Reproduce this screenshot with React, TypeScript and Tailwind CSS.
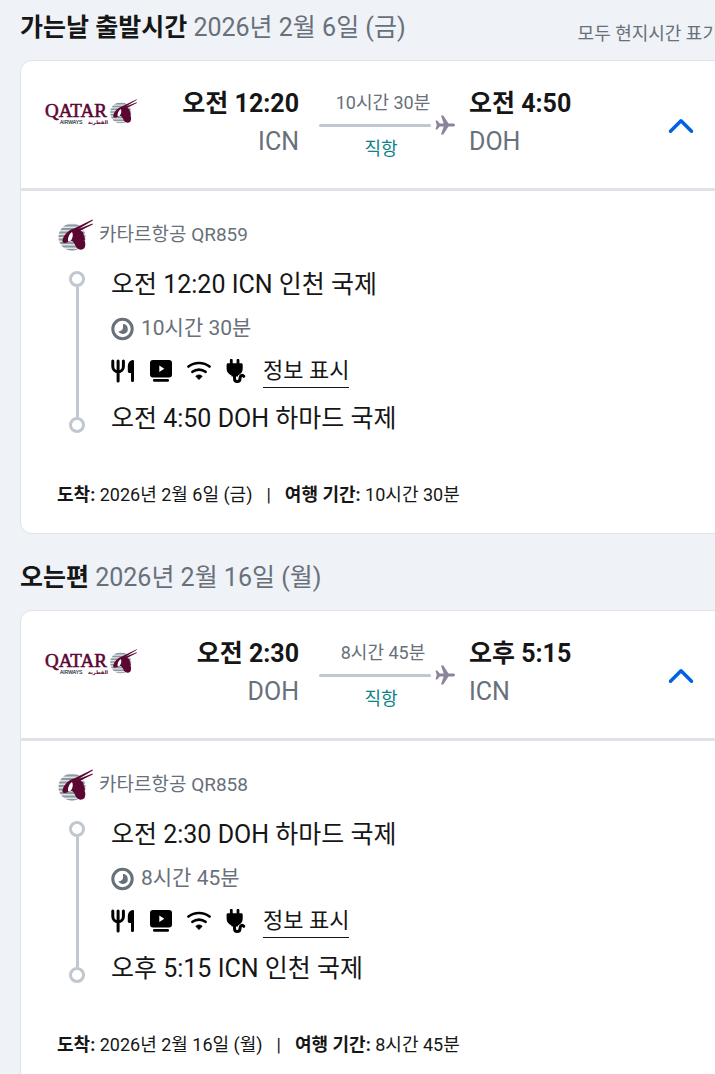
import {ReactNode, useId, useState} from 'react'
import {ChevronDown, ChevronUp} from 'lucide-react'

type Stop = {
    time: string
    code: string
    airport: string
}

type Leg = {
    id: string
    title: string
    date: string
    note?: string
    flight: string
    duration: string
    from: Stop
    to: Stop
    arrival: string
}

const legs: Leg[] = [
    {
        id: 'outbound',
        title: '가는날 출발시간',
        date: '2026년 2월 6일 (금)',
        note: '모두 현지시간 표기',
        flight: 'QR859',
        duration: '10시간 30분',
        from: {time: '오전 12:20', code: 'ICN', airport: '인천 국제'},
        to: {time: '오전 4:50', code: 'DOH', airport: '하마드 국제'},
        arrival: '2026년 2월 6일 (금)',
    },
    {
        id: 'return',
        title: '오는편',
        date: '2026년 2월 16일 (월)',
        flight: 'QR858',
        duration: '8시간 45분',
        from: {time: '오전 2:30', code: 'DOH', airport: '하마드 국제'},
        to: {time: '오후 5:15', code: 'ICN', airport: '인천 국제'},
        arrival: '2026년 2월 16일 (월)',
    },
]

// Striped disc with the oryx head, drawn on a 36x34 grid
function OryxMark() {
    const clipId = useId()

    return (
        <g>
            <clipPath id={clipId}>
                <circle cx="15" cy="19" r="13.500"/>
            </clipPath>
            <g clipPath={`url(#${clipId})`}>
                <path d="M0 5h30v28H0z" fill="#dfe3e5"/>
                <path
                    d="M0 7.500h30M0 11h30M0 14.500h30M0 18h30M0 21.500h30M0 25h30M0 28.500h30M0 32h30"
                    stroke="#8d99a1"
                    strokeWidth="1.900"
                />
            </g>
            <path
                d="M5.500 22C7 16.500 11 12.500 17 10.500L35.500 1.500l.4.900L21 11.200 35.500 5.500l.3 1L23.500 12.500c2.800 1.500 3.600 3.200 3.200 5.300 1.300 1.700 1.500 3 .8 4.700 1.200 2.500 1 5.500 0 7.500-2.500 2.500-6 2-8-.5-1.700-2.500-1.800-5-4.500-6.500-2.500 0-4 1.500-7 2-2 .2-3-1-2.500-3z"
                fill="#5c0632"
            />
            <path d="M11 23.500c-.5-3.500 1-7.500 4-9.500 1.500 2.500.8 6.500-1.500 9z" fill="#fff"/>
        </g>
    )
}

function QatarLogo() {
    return (
        <svg className="h-8 w-24" viewBox="0 0 96 32" role="img" aria-label="Qatar Airways">
            <text x="0" y="20" fontFamily="Liberation Serif, serif" fontSize="19" fill="#5c0632" stroke="#5c0632" strokeWidth=".6">QATAR</text>
            <text x="15" y="27" fontFamily="Liberation Sans, sans-serif" fontSize="5" fill="#3c4550" stroke="#3c4550" strokeWidth=".2">AIRWAYS</text>
            <text x="63" y="27" textAnchor="end" direction="ltr" fontFamily="DejaVu Sans, sans-serif" fontSize="5" fontWeight="700" fill="#5c0632">القطرية</text>
            <g transform="translate(64 1) scale(.78)">
                <OryxMark/>
            </g>
        </svg>
    )
}

function PlaneIcon() {
    return (
        <svg className="h-5 w-5 shrink-0" viewBox="0 0 20 20" fill="#8b8397" aria-hidden="true">
            <path d="M.5 5.500h1.700l2.500 3h4L6 .5h2.300l5.200 8h5c2 .6 2 2.400 0 3h-5l-5.200 8H6l2.700-8h-4l-2.500 3H.5L1.800 10z"/>
        </svg>
    )
}

function ClockIcon() {
    return (
        <svg className="h-6 w-6 shrink-0" viewBox="0 0 24 24" aria-hidden="true">
            <circle cx="11.500" cy="12" r="9.700" fill="none" stroke="#68707a" strokeWidth="3"/>
            <path d="M12 7a5 5 0 1 1-4.700 7.200c2.500.3 5-1.500 4.700-4.200z" fill="#68707a"/>
        </svg>
    )
}

function MealIcon() {
    return (
        <svg className="h-6 w-6" viewBox="0 0 24 24" role="img" aria-label="기내식">
            <path d="M1.800 2v5.500a5.300 5.300 0 0 0 10.600 0V2M7.100 2v20" fill="none" stroke="#000" strokeWidth="3" strokeLinecap="round"/>
            <path d="M23 2.200v19.300a1.500 1.500 0 0 1-3 0V14h-1.500c-1.200 0-1.700-.6-1.700-1.700V7c0-3 2-5.400 4.700-6 .9-.1 1.500.4 1.500 1.200z"/>
        </svg>
    )
}

function VideoIcon() {
    return (
        <svg className="h-6 w-6" viewBox="0 0 24 24" role="img" aria-label="영상">
            <path d="M4 1h16a3 3 0 0 1 3 3v11.500a3 3 0 0 1-3 3H4a3 3 0 0 1-3-3V4a3 3 0 0 1 3-3zm6.300 5.500v6.600l5-3.300z" fillRule="evenodd"/>
            <rect x="4" y="20" width="16" height="2.700" rx="1.300"/>
        </svg>
    )
}

function WifiIcon() {
    return (
        <svg className="h-6 w-6" viewBox="0 0 24 24" role="img" aria-label="와이파이">
            <path d="M1.500 7.500c6-4.700 15-4.700 21 0M5.500 12.800c3.800-3 9.200-3 13 0" fill="none" stroke="#000" strokeWidth="2.700" strokeLinecap="round"/>
            <path d="M12 20.500 8.900 17.300c1.700-1.700 4.500-1.700 6.200 0z" stroke="#000" strokeLinejoin="round"/>
        </svg>
    )
}

function PlugIcon() {
    return (
        <svg className="h-6 w-6" viewBox="0 0 24 24" role="img" aria-label="전원">
            <path d="M6.300 1.200v5M13 1.200v5" stroke="#000" strokeWidth="2.800" strokeLinecap="round"/>
            <path d="M3 4.300h13.300c.8 0 1.400.6 1.400 1.400v4c0 3.300-1.800 5-4.700 6.800v1H6.500v-1C3.500 14.700 1.600 13 1.600 9.700v-4c0-.8.600-1.400 1.400-1.400z"/>
            <path d="M9.500 15v4.500c0 4 5.500 4 5.500 0 0-3 2.300-4 3.800-2.200" fill="none" stroke="#000" strokeWidth="3" strokeLinecap="round"/>
        </svg>
    )
}

function TimelineDot() {
    return <span className="h-4 w-4 shrink-0 rounded-full border-3 border-[#c1c7cf]"/>
}

function StopRow({stop}: { stop: Stop }) {
    return (
        <p className="text-[25px] leading-10 text-[#161616]">
            {stop.time} {stop.code} {stop.airport}
        </p>
    )
}

function Field({label, children}: { label: string, children: ReactNode }) {
    return (
        <span>
            <strong className="font-bold">{label}:</strong> {children}
        </span>
    )
}

function LegCard({leg}: { leg: Leg }) {
    const [open, setOpen] = useState(true)
    const Chevron = open ? ChevronUp : ChevronDown

    return (
        <section className="mb-4">
            <div className="flex items-center justify-between pr-4 pb-1">
                <h2 className="text-[25px] leading-14 text-[#68707a]">
                    <span className="font-bold text-[#161616]">{leg.title}</span> {leg.date}
                </h2>
                {leg.note && <p className="pt-3 text-lg whitespace-nowrap text-[#68707a]">{leg.note}</p>}
            </div>

            <article className="rounded-xl border border-[#dfe3e8] bg-white">
                <div className="flex items-start pt-6 pr-8 pb-[25px] pl-6">
                    <div className="pt-3">
                        <QatarLogo/>
                    </div>
                    <div className="w-[158px] shrink-0 text-right text-[25px] leading-[38px] text-[#68707a]">
                        <p className="font-bold text-[#161616]">{leg.from.time}</p>
                        <p>{leg.from.code}</p>
                    </div>
                    <div className="mr-3.5 ml-4 w-[140px] shrink-0 pt-1 pl-1 text-lg">
                        <p className="pr-2 text-center leading-7 text-[#68707a]">{leg.duration}</p>
                        <div className="-mt-0.5 flex items-center gap-1">
                            <span className="h-[3px] flex-1 rounded-full bg-[#c1c7cf]"/>
                            <PlaneIcon/>
                        </div>
                        <p className="pr-3 text-center leading-7 text-[#0c838a]">직항</p>
                    </div>
                    <div className="flex-1 text-[25px] leading-[38px] text-[#68707a]">
                        <p className="font-bold text-[#161616]">{leg.to.time}</p>
                        <p>{leg.to.code}</p>
                    </div>
                    <button
                        type="button"
                        aria-label="여정 상세"
                        aria-expanded={open}
                        aria-controls={leg.id}
                        onClick={() => setOpen(!open)}
                        className="mt-1 self-center text-[#0062e3]"
                    >
                        <Chevron className="h-[42px] w-[42px]" strokeWidth={2}/>
                    </button>
                </div>

                {open && (
                    <div id={leg.id} className="border-t-3 border-[#dfe3e8] pt-6 pr-10 pb-[26px] pl-9">
                        <div className="flex h-10 items-center gap-1.5 text-[19px] text-[#68707a]">
                            <svg className="h-9 w-9" viewBox="0 0 36 34" aria-hidden="true">
                                <OryxMark/>
                            </svg>
                            <span>카타르항공 {leg.flight}</span>
                        </div>

                        <div className="mt-2.5 ml-3 flex gap-[26px]">
                            <div className="flex flex-col items-center py-1.5">
                                <TimelineDot/>
                                <span className="w-[3px] flex-1 bg-[#c1c7cf]"/>
                                <TimelineDot/>
                            </div>
                            <div>
                                <StopRow stop={leg.from}/>
                                <p className="flex h-12 items-center gap-1.5 text-[21px] text-[#68707a]">
                                    <ClockIcon/>
                                    {leg.duration}
                                </p>
                                <div className="mb-2.5 flex h-9 items-center gap-3.5">
                                    <MealIcon/>
                                    <VideoIcon/>
                                    <WifiIcon/>
                                    <PlugIcon/>
                                    <a href="#" className="border-b border-[#161616] text-[22px] leading-8 text-[#161616]">정보 표시</a>
                                </div>
                                <StopRow stop={leg.to}/>
                            </div>
                        </div>

                        <p className="mt-11 flex text-lg leading-6 text-[#161616]">
                            <Field label="도착">{leg.arrival}</Field>
                            <span className="mx-3.5">|</span>
                            <Field label="여행 기간">{leg.duration}</Field>
                        </p>
                    </div>
                )}
            </article>
        </section>
    )
}

export default function App() {
    return (
        <main className="min-h-screen overflow-hidden bg-[#eff2f7] pl-5 font-[Roboto,'Noto_Sans_CJK_KR',sans-serif]">
            <div className="-mr-5">
                {legs.map((leg) => (
                    <LegCard key={leg.id} leg={leg}/>
                ))}
            </div>
        </main>
    )
}
